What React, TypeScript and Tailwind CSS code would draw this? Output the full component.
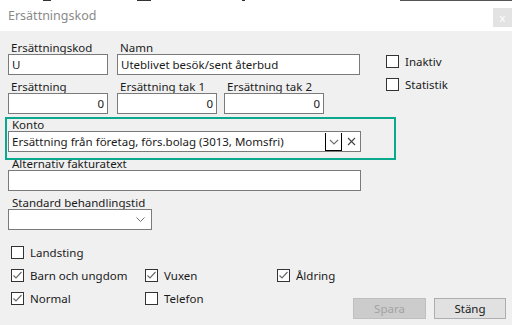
import React from 'react';

const font = { fontFamily: '"Noto Sans", "Liberation Sans", sans-serif' };

function Check({ checked, label }: { checked?: boolean; label: string }) {
  return (
    <div className="flex items-center h-[13px]">
      <div className="w-[13px] h-[13px] border border-[#333333] bg-white flex items-center justify-center shrink-0">
        {checked && (
          <svg width="11" height="11" viewBox="0 0 11 11">
            <polyline points="1.5,5.5 4,8 9.5,2" fill="none" stroke="#6b6b6b" strokeWidth="1.2" />
          </svg>
        )}
      </div>
      <span className="ml-[6px] text-[11.5px] leading-[13px] text-[#1a1a1a]">{label}</span>
    </div>
  );
}

function Field({ label, value, w, right }: { label: string; value?: string; w: string; right?: boolean }) {
  return (
    <div className={`flex flex-col ${w}`}>
      <div className="h-[13px] leading-[13px] text-[11.5px] pl-[3px] text-[#1a1a1a]">{label}</div>
      <div
        className={`h-[21px] border border-[#7a7a7a] bg-white flex items-center px-[3px] text-[11.5px] text-[#1a1a1a] ${
          right ? 'justify-end' : ''
        }`}
      >
        {value}
      </div>
    </div>
  );
}

export default function App() {
  return (
    <div className="w-[512px] h-[325px] overflow-hidden bg-[#f0f0f0] flex flex-col" style={font}>
      {/* page behind the dialog */}
      <div className="h-[2px] bg-white relative shrink-0">
        <div className="absolute left-[43px] top-0 w-[8px] h-[1px] bg-[#333]" />
        <div className="absolute left-[137px] top-0 w-[14px] h-[1px] bg-[#333]" />
        <div className="absolute left-[242px] top-0 w-[3px] h-[1px] bg-[#333]" />
        <div className="absolute left-[400px] top-0 w-[112px] h-[1px] bg-[#555]" />
      </div>

      {/* title bar */}
      <div className="h-[29px] bg-white flex items-center justify-between shrink-0">
        <span className="pl-[8px] text-[12.5px] text-[#8a8a8a]">Ersättningskod</span>
        <div className="w-[19px] h-[19px] bg-[#e3e3e3] flex items-center justify-center self-start mt-[6px] text-white text-[11px] leading-none">
          x
        </div>
      </div>

      {/* body */}
      <div className="relative flex-1 flex flex-col pt-[10px] px-[8px]">
        <div className="flex">
          <div className="flex flex-col w-[353px]">
            <div className="flex gap-[9px]">
              <Field label="Ersättningskod" value="U" w="w-[100px]" />
              <Field label="Namn" value="Uteblivet besök/sent återbud" w="w-[243px]" />
            </div>
            <div className="flex gap-[9px] mt-[5px]">
              <Field label="Ersättning" value="0" w="w-[100px]" right />
              <div className="flex gap-[7px]">
                <Field label="Ersättning tak 1" value="0" w="w-[100px]" right />
                <Field label="Ersättning tak 2" value="0" w="w-[100px]" right />
              </div>
            </div>

            {/* Konto */}
            <div className="flex flex-col mt-[4px]">
              <div className="h-[13px] leading-[13px] text-[11.5px] pl-[4px] text-[#1a1a1a]">Konto</div>
              <div className="h-[21px] border border-[#7a7a7a] bg-white flex items-center text-[11.5px] text-[#1a1a1a]">
                <span className="pl-[3px] flex-1 whitespace-nowrap overflow-hidden">
                  Ersättning från företag, förs.bolag (3013, Momsfri)
                </span>
                <div className="w-[17px] h-[18px] self-start mt-[1px] border-l border-r border-b border-black flex items-center justify-center">
                  <svg width="10" height="6" viewBox="0 0 10 6">
                    <polyline points="1,1 5,5 9,1" fill="none" stroke="#707070" strokeWidth="1.1" />
                  </svg>
                </div>
                <div className="w-[18px] flex items-center justify-center">
                  <svg width="9" height="9" viewBox="0 0 9 9">
                    <path d="M1 1 L8 8 M8 1 L1 8" stroke="#444" strokeWidth="1.1" />
                  </svg>
                </div>
              </div>
            </div>

            <div className="flex flex-col mt-[5px]">
              <div className="h-[13px] leading-[13px] text-[11.5px] pl-[4px] text-[#1a1a1a]">Alternativ fakturatext</div>
              <div className="h-[21px] border border-[#7a7a7a] bg-white" />
            </div>

            <div className="flex flex-col mt-[5px] w-[144px]">
              <div className="h-[13px] leading-[13px] text-[11.5px] pl-[4px] text-[#1a1a1a]">Standard behandlingstid</div>
              <div className="h-[21px] border border-[#7a7a7a] bg-white flex items-center justify-end pr-[6px]">
                <svg width="9" height="5" viewBox="0 0 9 5">
                  <polyline points="0.5,0.5 4.5,4.5 8.5,0.5" fill="none" stroke="#707070" strokeWidth="1" />
                </svg>
              </div>
            </div>
          </div>

          {/* right checkboxes */}
          <div className="flex flex-col gap-[10px] ml-[25px] mt-[14px]">
            <Check label="Inaktiv" />
            <Check label="Statistik" />
          </div>
        </div>

        {/* bottom checkboxes + buttons */}
        <div className="flex items-start mt-[16px] pl-[3px]">
          <div className="grid grid-cols-[134px_132px_auto] gap-y-[10px]">
            <Check label="Landsting" />
            <div />
            <div />
            <Check checked label="Barn och ungdom" />
            <Check checked label="Vuxen" />
            <Check checked label="Åldring" />
            <Check checked label="Normal" />
            <Check label="Telefon" />
          </div>
          <div className="ml-auto flex gap-[8px] mt-[52px] mr-[-2px]">
            <div className="w-[73px] h-[21px] bg-[#cccccc] border border-[#bfbfbf] flex items-center justify-center text-[11.5px] text-[#a3a3a3]">
              Spara
            </div>
            <div className="w-[72px] h-[21px] bg-[#e1e1e1] border border-[#adadad] flex items-center justify-center text-[11.5px] text-[#1a1a1a]">
              Stäng
            </div>
          </div>
        </div>

        {/* highlight around Konto */}
        <div className="absolute left-[5px] top-[86px] w-[391px] h-[43px] border-2 border-[#0aa88c] pointer-events-none" />
      </div>
    </div>
  );
}
